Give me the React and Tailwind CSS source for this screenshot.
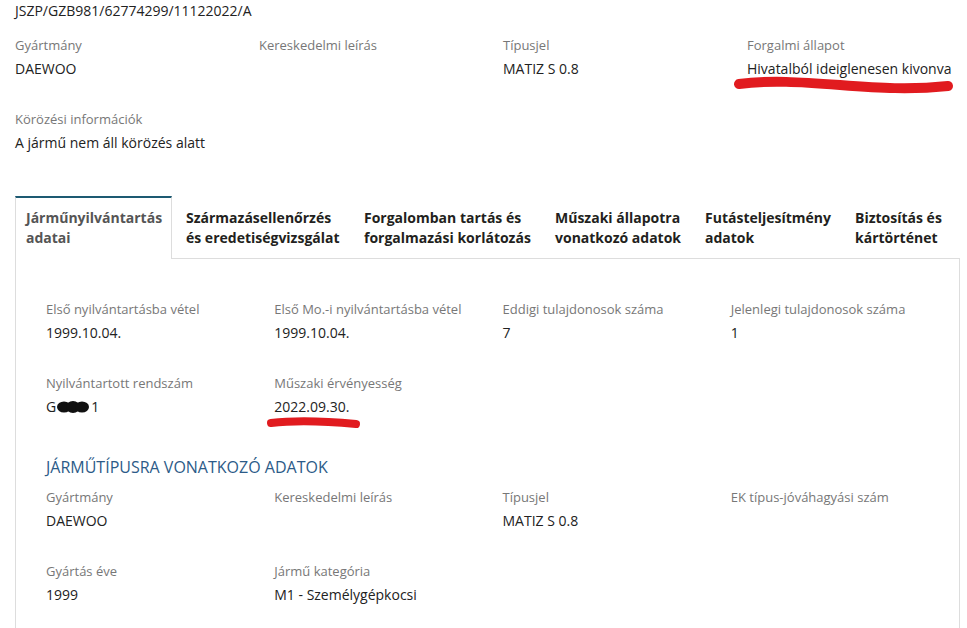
import React from "react";

const topFields = [
  [
    { label: "Gyártmány", value: "DAEWOO" },
    { label: "Kereskedelmi leírás", value: "" },
    { label: "Típusjel", value: "MATIZ S 0.8" },
    { label: "Forgalmi állapot", value: "Hivatalból ideiglenesen kivonva" },
  ],
  [{ label: "Körözési információk", value: "A jármű nem áll körözés alatt" }],
];

const tabs = [
  { lines: ["Járműnyilvántartás", "adatai"], w: "w-[157px]", active: true },
  { lines: ["Származásellenőrzés", "és eredetiségvizsgálat"], w: "w-[180px]", pl: "pl-[14px]" },
  { lines: ["Forgalomban tartás és", "forgalmazási korlátozás"], w: "w-[191px]", pl: "pl-[12px]" },
  { lines: ["Műszaki állapotra", "vonatkozó adatok"], w: "w-[150px]", pl: "pl-[12px]" },
  { lines: ["Futásteljesítmény", "adatok"], w: "w-[150px]", pl: "pl-[12px]" },
  { lines: ["Biztosítás és", "kártörténet"], w: "flex-1", pl: "pl-[12px]" },
];

function Field({ label, value }) {
  return (
    <div className="mb-[30px]">
      <div className="text-[13px] leading-[20px] text-[#777]">{label}</div>
      <div className="mt-[4px] min-h-[20px] text-[14px] leading-[20px] text-[#222]">{value}</div>
    </div>
  );
}

function PlateValue() {
  return (
    <span className="inline-flex items-center">
      G
      <svg width="33" height="12" viewBox="0 0 33 12" className="mx-[1px]">
        <ellipse cx="7" cy="6" rx="7" ry="5.5" fill="#111" />
        <ellipse cx="16" cy="6" rx="7" ry="6" fill="#111" />
        <ellipse cx="25" cy="6" rx="7" ry="5.5" fill="#111" />
      </svg>
      1
    </span>
  );
}

export default function App() {
  return (
    <div className="relative w-[967px] h-[628px] overflow-hidden bg-white font-['Open_Sans',sans-serif]">
      <div className="pl-[15px]">
        <div className="text-[14px] leading-[22px] text-[#222]">JSZP/GZB981/62774299/11122022/A</div>

        <div className="mt-[13px]">
          {topFields.map((row, i) => (
            <div key={i} className="grid grid-cols-[244px_244px_244px_1fr]">
              {row.map((f) => (
                <Field key={f.label} {...f} />
              ))}
            </div>
          ))}
        </div>
      </div>

      <div className="ml-[15px] w-[945px] mt-[13px]">
        <div className="flex border-b border-[#ddd]">
          {tabs.map((t) =>
            t.active ? (
              <div
                key={t.lines[0]}
                className={`${t.w} -mb-px border-t-2 border-t-[#1d5a72] border-x border-x-[#ddd] bg-white pl-[10px] pt-[10px] pb-[11px] text-[14px] font-bold leading-[20px] text-[#555]`}
              >
                {t.lines.map((l) => (
                  <div key={l}>{l}</div>
                ))}
              </div>
            ) : (
              <div
                key={t.lines[0]}
                className={`${t.w} ${t.pl} pt-[12px] pb-[10px] text-[14px] font-bold leading-[20px] text-[#231f20]`}
              >
                {t.lines.map((l) => (
                  <div key={l} className="whitespace-nowrap">{l}</div>
                ))}
              </div>
            )
          )}
        </div>

        <div className="border-x border-[#ddd] pl-[30px] pt-[40px] h-[400px]">
          <div className="grid grid-cols-4">
            <Field label="Első nyilvántartásba vétel" value="1999.10.04." />
            <Field label="Első Mo.-i nyilvántartásba vétel" value="1999.10.04." />
            <Field label="Eddigi tulajdonosok száma" value="7" />
            <Field label="Jelenlegi tulajdonosok száma" value="1" />
            <Field label="Nyilvántartott rendszám" value={<PlateValue />} />
            <Field label="Műszaki érvényesség" value="2022.09.30." />
          </div>

          <h3 className="mt-[8px] mb-[8px] text-[16px] leading-[24px] font-normal text-[#2c5b88]">
            JÁRMŰTÍPUSRA VONATKOZÓ ADATOK
          </h3>

          <div className="grid grid-cols-4">
            <Field label="Gyártmány" value="DAEWOO" />
            <Field label="Kereskedelmi leírás" value="" />
            <Field label="Típusjel" value="MATIZ S 0.8" />
            <Field label="EK típus-jóváhagyási szám" value="" />
            <Field label="Gyártás éve" value="1999" />
            <Field label="Jármű kategória" value="M1 - Személygépkocsi" />
          </div>
        </div>
      </div>

      <svg className="pointer-events-none absolute inset-0" width="967" height="628" viewBox="0 0 967 628">
        <path
          d="M739 84 C 770 80, 800 82, 840 85 S 910 90, 948 86"
          stroke="#e11b1f"
          strokeWidth="10"
          strokeLinecap="round"
          fill="none"
        />
        <path
          d="M271 423 C 295 420, 325 421, 356 424"
          stroke="#e11b1f"
          strokeWidth="8"
          strokeLinecap="round"
          fill="none"
        />
      </svg>
    </div>
  );
}
